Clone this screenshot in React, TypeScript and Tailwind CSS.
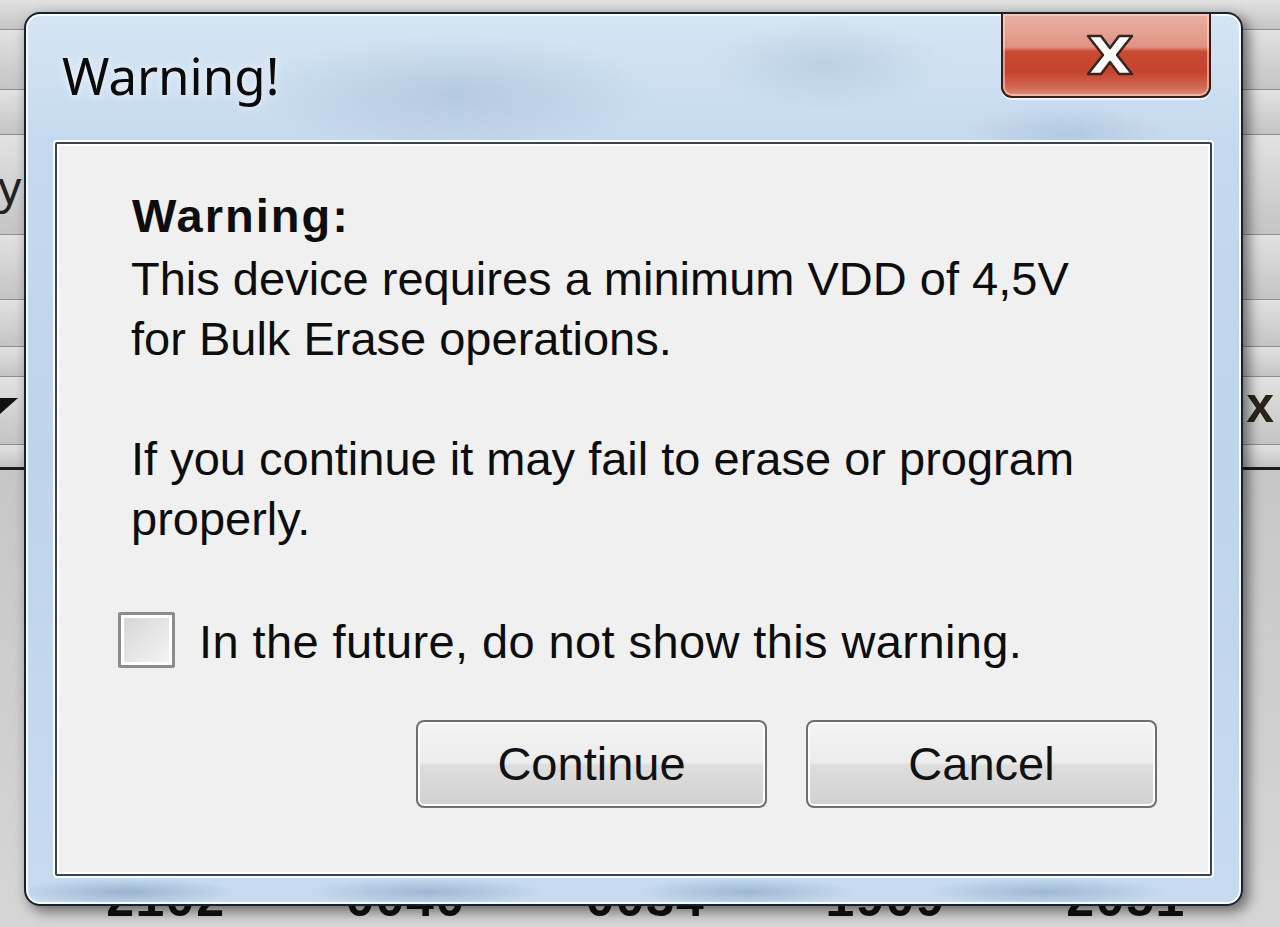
const rowClasses = [
  'h-[30px]',
  'h-[60px]',
  'h-[45px]',
  'h-[100px]',
  'h-[65px]',
  'h-[47px]',
  'h-[30px]',
  'h-[68px]',
  'h-[25px]',
]

const numbers = ['2102', '0040', '0034', '1909', '2051']

function CloseGlyph() {
  return (
    <svg width="50" height="44" viewBox="0 0 50 44">
      <polygon
        points="3,3 16,3 25,15 34,3 47,3 32,22 47,41 34,41 25,29 16,41 3,41 18,22"
        fill="#ffffff"
        stroke="#3a2420"
        strokeWidth="2.5"
        strokeLinejoin="round"
      />
    </svg>
  )
}

function Backdrop() {
  return (
    <div className="flex h-full flex-col">
      {rowClasses.map((h, i) => (
        <div
          key={i}
          className={`${h} flex items-center justify-between border-b border-[#8f8f8f] bg-[linear-gradient(180deg,#e2e2e2,#c4c4c4)] ${
            i === rowClasses.length - 1 ? 'border-b-[3px] border-b-[#1c1c1c]' : ''
          }`}
        >
          {i === 3 && (
            <span className="-ml-[2px] mt-[6px] text-[47px] leading-none text-[#222]">y</span>
          )}
          {i === 7 && (
            <svg width="18" height="16" viewBox="0 0 18 16" className="-mt-[10px]">
              <polygon points="0,0 18,0 0,16" fill="#111" />
            </svg>
          )}
          {i === 7 && (
            <span className="-mt-[12px] mr-[6px] text-[50px] font-bold leading-none text-[#2a2418]">x</span>
          )}
        </div>
      ))}
      <div className="flex flex-1 flex-col justify-end bg-[linear-gradient(180deg,#c6c6c6,#d6d6d6)]">
        <div className="flex h-[44px] gap-[117px] pl-[105px] font-['Liberation_Mono',monospace] text-[50px] font-bold leading-[50px] text-[#111]">
          {numbers.map((n) => (
            <span key={n} className="-mt-[5px] w-[123px]">
              {n}
            </span>
          ))}
        </div>
      </div>
    </div>
  )
}

function Button({ label }: { label: string }) {
  return (
    <button className="flex h-[88px] w-[351px] items-center justify-center rounded-[8px] border-[2.5px] border-[#6f6f6f] bg-[linear-gradient(180deg,#f4f4f4_0%,#ececec_48%,#dddddd_52%,#d1d1d1_100%)] text-[47px] leading-[60px] text-[#111] shadow-[inset_0_0_0_2px_#fcfcfc]">
      {label}
    </button>
  )
}

export default function App() {
  return (
    <div className="relative h-[927px] w-[1280px] overflow-hidden bg-[#cfcfcf] font-['Liberation_Sans',Arial,sans-serif]">
      <Backdrop />

      {/* dialog window */}
      <div className="absolute left-[24px] top-[12px] flex h-[894px] w-[1219px] flex-col rounded-[16px] border-2 border-[#18222c] bg-[radial-gradient(ellipse_200px_60px_at_430px_80px,rgba(120,150,180,0.28),transparent),radial-gradient(ellipse_120px_45px_at_800px_50px,rgba(120,150,180,0.22),transparent),radial-gradient(ellipse_100px_30px_at_1040px_120px,rgba(120,150,180,0.25),transparent),radial-gradient(ellipse_110px_14px_at_100px_878px,rgba(100,130,165,0.45),transparent),radial-gradient(ellipse_120px_14px_at_400px_878px,rgba(100,130,165,0.4),transparent),radial-gradient(ellipse_110px_14px_at_720px_878px,rgba(100,130,165,0.4),transparent),radial-gradient(ellipse_120px_14px_at_1020px_878px,rgba(100,130,165,0.4),transparent),linear-gradient(180deg,#d6e5f4_0%,#c4d9ee_15%,#bed4ea_50%,#c6dbf0_100%)] shadow-[inset_0_0_0_2px_rgba(255,255,255,0.85),5px_5px_14px_rgba(0,0,0,0.55)]">
        {/* title bar */}
        <div className="flex h-[128px] items-start justify-between">
          <span className="ml-[36px] mt-[36px] font-['Noto_Sans',sans-serif] text-[51px] leading-none text-[#0a0a0a] [text-shadow:0_0_10px_rgba(255,255,255,0.9)]">
            Warning!
          </span>
          <div className="mr-[30px] flex h-[84px] w-[210px] items-center justify-center rounded-b-[11px] border-2 border-t-0 border-[#3a1c16] bg-[linear-gradient(180deg,#eab0a2_0%,#e09483_40%,#c94a33_46%,#c4432c_70%,#d06450_88%,#de8e7e_100%)] pl-[8px] shadow-[inset_0_0_0_2px_rgba(255,220,210,0.55),0_2px_0_rgba(255,255,255,0.7)]">
            <CloseGlyph />
          </div>
        </div>

        {/* client area */}
        <div className="mx-[29px] mb-[28px] flex flex-1 flex-col rounded-[2px] border-2 border-[#3a4450] bg-[#f0f0f0] pl-[61px] pt-[42px] shadow-[0_0_0_2px_rgba(255,255,255,0.9),inset_0_0_0_2px_#ffffff] text-[47px] leading-[60px] text-[#0d0d0d]">
          <div className="ml-[14px] font-bold tracking-[2px]">Warning:</div>
          <div className="ml-[13px] mt-[3px]">
            This device requires a minimum VDD of 4,5V
            <br />
            for Bulk Erase operations.
          </div>
          <div className="ml-[13px] mt-[60px]">
            If you continue it may fail to erase or program
            <br />
            properly.
          </div>

          <label className="mt-[63px] flex items-start gap-[24px]">
            <span className="h-[56px] w-[57px] rounded-[2px] border-[3px] border-[#8c8c8c] bg-[linear-gradient(135deg,#d4d4d4,#f6f6f6)] shadow-[inset_0_0_0_3px_#ffffff]" />
            <span className="tracking-[0.4px]">In the future, do not show this warning.</span>
          </label>

          <div className="mr-[53px] mt-[48px] flex justify-end gap-[39px]">
            <Button label="Continue" />
            <Button label="Cancel" />
          </div>
        </div>
      </div>
    </div>
  )
}
